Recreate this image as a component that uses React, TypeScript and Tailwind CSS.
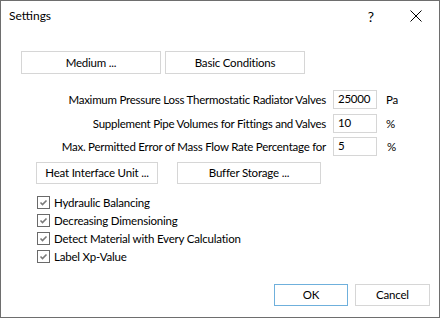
import React from "react"

const font = { fontFamily: 'Lato, "Noto Sans", sans-serif' }

function Btn({ label, w, h = 23, primary = false }: { label: string; w: number; h?: number; primary?: boolean }) {
  return (
    <div
      className={`flex items-center justify-center bg-white border text-[11.5px] tracking-[-0.2px] text-black whitespace-nowrap ${
        primary ? "border-[#6fb0dc]" : "border-[#d6d6d6]"
      }`}
      style={{ width: w, height: h }}
    >
      {label}
    </div>
  )
}

function Field({ label, value, unit, unitPad }: { label: string; value: string; unit: string; unitPad: number }) {
  return (
    <div className="flex items-center h-[19px] text-[11.5px] tracking-[-0.25px]">
      <div className="w-[325px] text-right text-black whitespace-nowrap">{label}</div>
      <div className="ml-[7px] w-[44px] h-[19px] border border-[#d6d6d6] bg-white flex items-center pl-[4px] pb-[1px]">
        {value}
      </div>
      <div style={{ marginLeft: unitPad }}>{unit}</div>
    </div>
  )
}

function Check({ label }: { label: string }) {
  return (
    <div className="flex items-center h-[13px]">
      <div className="w-[13px] h-[13px] border border-[#6a6a6a] bg-white flex items-center justify-center">
        <svg width="9" height="9" viewBox="0 0 9 9">
          <path d="M1.5 4.5 L3.5 6.5 L7.5 2.5" stroke="#7a7a7a" strokeWidth="1.6" fill="none" />
        </svg>
      </div>
      <span className="ml-[4px] text-[11.5px] tracking-[-0.2px] text-black whitespace-nowrap">{label}</span>
    </div>
  )
}

export default function App() {
  return (
    <div className="w-[440px] h-[318px] border border-[#6e6e6e] bg-white flex flex-col text-black" style={font}>
      {/* Title bar */}
      <div className="h-[30px] flex items-center pl-[8px] shrink-0">
        <span className="text-[12px]">Settings</span>
        <span className="ml-auto text-[14px] mr-[36px]">?</span>
        <svg width="12" height="12" viewBox="0 0 12 12" className="mr-[17px]">
          <path d="M0.5 0.5 L11.5 11.5 M11.5 0.5 L0.5 11.5" stroke="#000" strokeWidth="1" />
        </svg>
      </div>

      <div className="flex gap-[4px] pl-[20px] mt-[20px]">
        <Btn label="Medium ..." w={140} />
        <Btn label="Basic Conditions" w={140} />
      </div>

      <div className="flex flex-col mt-[16px]">
        <Field label="Maximum Pressure Loss Thermostatic Radiator Valves" value="25000" unit="Pa" unitPad={9} />
        <div className="h-[5px]" />
        <Field label="Supplement Pipe Volumes for Fittings and Valves" value="10" unit="%" unitPad={9} />
        <div className="h-[4px]" />
        <Field label="Max. Permitted Error of Mass Flow Rate Percentage for" value="5" unit="%" unitPad={10} />
      </div>

      <div className="flex gap-[19px] pl-[35px] mt-[6px]">
        <Btn label="Heat Interface Unit ..." w={122} h={22} />
        <Btn label="Buffer Storage ..." w={144} h={22} />
      </div>

      <div className="flex flex-col gap-[5px] pl-[36px] mt-[12px]">
        <Check label="Hydraulic Balancing" />
        <Check label="Decreasing Dimensioning" />
        <Check label="Detect Material with Every Calculation" />
        <Check label="Label Xp-Value" />
      </div>

      <div className="mt-auto flex justify-end gap-[7px] pr-[9px] pb-[11px]">
        <Btn label="OK" w={74} h={22} primary />
        <Btn label="Cancel" w={75} h={22} />
      </div>
    </div>
  )
}
